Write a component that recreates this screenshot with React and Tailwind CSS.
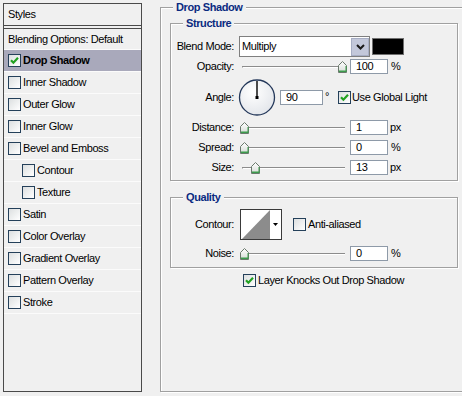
import React from "react";

function Check({ checked }) {
  return (
    <span className="w-[13px] h-[13px] shrink-0 border border-[#24405a] bg-linear-to-br from-[#dcdfe0] to-white flex items-center justify-center">
      {checked && (
        <svg width="11" height="11" viewBox="0 0 11 11">
          <path d="M2 5.2 L4.4 7.7 L9 2.8" fill="none" stroke="#21a121" strokeWidth="2.2" />
        </svg>
      )}
    </span>
  );
}

function Thumb({ className }) {
  return (
    <svg width="9" height="12" viewBox="0 0 9 12" className={className}>
      <defs>
        <linearGradient id="tg" x1="0" y1="0" x2="0" y2="1">
          <stop offset="0" stopColor="#ffffff" />
          <stop offset="1" stopColor="#d6dbd6" />
        </linearGradient>
      </defs>
      <path d="M4.5 0.5 L8.5 4.5 L8.5 11.5 L0.5 11.5 L0.5 4.5 Z" fill="url(#tg)" stroke="#6a786c" strokeWidth="1" />
      <path d="M1 9.5 L8 9.5 L8 11 L1 11 Z" fill="#3c9c4c" />
      <path d="M8 5 L8 11" stroke="#3c9c4c" strokeWidth="1" />
    </svg>
  );
}

function Slider({ thumb }) {
  return (
    <div className="relative w-[108px] h-[15px] ml-[5px] shrink-0">
      <div className="ml-[3px] mr-[2px] mt-[7px] h-[2px] border-t border-t-[#8c8c8c] border-b border-b-white border-l border-l-[#8c8c8c]" />
      <Thumb className={`absolute top-[2px] ${thumb}`} />
    </div>
  );
}

function Input({ value, w = "w-[38px]", ml = "ml-[3px]" }) {
  return (
    <div className={`${ml} ${w} shrink-0 h-[15px] bg-white border border-[#8e9aa8] pl-[5px] leading-[13px] text-black`}>
      {value}
    </div>
  );
}

function Label({ children }) {
  return <div className="w-[63px] shrink-0 text-right">{children}</div>;
}

function Group({ title, className, titleMl, children }) {
  return (
    <div
      className={`border border-[#a0a0a0] shadow-[inset_1px_1px_0_#fff,1px_1px_0_#fff] flex flex-col shrink-0 ${className}`}
    >
      <div
        className={`-mt-[7px] h-[13px] leading-[13px] self-start bg-[#f0f0f0] px-[3px] font-bold text-[#0a2a80] ${titleMl}`}
      >
        {title}
      </div>
      {children}
    </div>
  );
}

const items = [
  { label: "Drop Shadow", checked: true, active: true },
  { label: "Inner Shadow" },
  { label: "Outer Glow" },
  { label: "Inner Glow" },
  { label: "Bevel and Emboss" },
  { label: "Contour", indent: true },
  { label: "Texture", indent: true },
  { label: "Satin" },
  { label: "Color Overlay" },
  { label: "Gradient Overlay" },
  { label: "Pattern Overlay" },
  { label: "Stroke" },
];

export default function App() {
  return (
    <div className="w-[462px] h-[396px] overflow-hidden bg-[#f0f0f0] flex items-start text-black font-['Liberation_Sans',Arial,sans-serif] text-[11px] tracking-[-0.4px]">
      {/* Left styles list */}
      <div className="ml-[3px] mt-[3px] w-[139px] h-[389px] shrink-0 border border-[#4a4a4a] flex flex-col bg-[#f0f0f0]">
        <div className="h-[22px] flex items-center pl-[4px] border-b border-[#4a4a4a]">Styles</div>
        <div className="h-[2px]" />
        <div className="border-t border-[#4a4a4a] flex-1 flex flex-col">
          <div className="h-[21px] flex items-center pl-[4px] border-b border-[#fbfbfb]">
            Blending Options: Default
          </div>
          {items.map((it) => (
            <div
              key={it.label}
              className={`h-[22px] flex items-center border-b border-[#fbfbfb] ${
                it.indent ? "pl-[18px]" : "pl-[4px]"
              } ${it.active ? "bg-[#a9a9bb] font-bold" : ""}`}
            >
              <Check checked={it.checked} />
              <span className="ml-[2px]">{it.label}</span>
            </div>
          ))}
        </div>
      </div>

      {/* Right panel */}
      <Group title="Drop Shadow" titleMl="ml-[3px]" className="ml-[18px] mt-[7px] w-[312px] h-[385px] pl-[9px]">
        <Group title="Structure" titleMl="ml-[12px]" className="mt-[9px] w-[288px] h-[158px]">
          <div className="mt-[6px] h-[21px] flex items-center">
            <Label>Blend Mode:</Label>
            <div className="ml-[5px] w-[131px] h-[21px] shrink-0 bg-white border border-[#7f7f7f] flex items-center">
              <span className="flex-1 pl-[2px]">Multiply</span>
              <div className="w-[18px] h-[18px] bg-[#c3c8da] border border-[#a7aec4] flex items-center justify-center">
                <svg width="9" height="6" viewBox="0 0 9 6">
                  <path d="M1 1 L4.5 4.5 L8 1" fill="none" stroke="#1a1a1a" strokeWidth="2" />
                </svg>
              </div>
            </div>
            <div className="ml-[2px] w-[32px] h-[17px] shrink-0 bg-black border border-[#6f6f6f]" />
          </div>

          <div className="mt-[2px] h-[15px] flex items-center">
            <Label>Opacity:</Label>
            <Slider thumb="left-[99px]" />
            <Input value="100" />
            <span className="ml-[3px]">%</span>
          </div>

          <div className="mt-[5px] h-[37px] flex items-center">
            <Label>Angle:</Label>
            <svg width="38" height="37" viewBox="0 0 38 37" className="ml-[4px] shrink-0">
              <defs>
                <radialGradient id="dg" cx="40%" cy="35%" r="70%">
                  <stop offset="0" stopColor="#ffffff" />
                  <stop offset="1" stopColor="#e2e5ea" />
                </radialGradient>
              </defs>
              <circle cx="19" cy="18.5" r="17.5" fill="url(#dg)" stroke="#24385a" strokeWidth="1.3" />
              <line x1="19" y1="18.5" x2="19" y2="2" stroke="#000" strokeWidth="1.4" />
              <rect x="17.5" y="17" width="3" height="3" fill="#000" />
            </svg>
            <Input value="90" w="w-[43px]" ml="ml-[4px]" />
            <span className="ml-[2px] w-[13px] shrink-0 self-start mt-[9px]">°</span>
            <Check checked />
            <span className="ml-[1px] whitespace-nowrap">Use Global Light</span>
          </div>

          <div className="mt-[4px] h-[15px] flex items-center">
            <Label>Distance:</Label>
            <Slider thumb="left-[1px]" />
            <Input value="1" />
            <span className="ml-[2px]">px</span>
          </div>

          <div className="mt-[5px] h-[15px] flex items-center">
            <Label>Spread:</Label>
            <Slider thumb="left-[1px]" />
            <Input value="0" />
            <span className="ml-[3px]">%</span>
          </div>

          <div className="mt-[5px] h-[15px] flex items-center">
            <Label>Size:</Label>
            <Slider thumb="left-[12px]" />
            <Input value="13" />
            <span className="ml-[2px]">px</span>
          </div>
        </Group>

        <Group title="Quality" titleMl="ml-[12px]" className="mt-[16px] w-[288px] h-[71px]">
          <div className="mt-[5px] h-[31px] flex items-center">
            <Label>Contour:</Label>
            <div className="ml-[6px] w-[42px] h-[31px] shrink-0 border border-[#3a3a3a] bg-white flex">
              <svg width="29" height="29" viewBox="0 0 29 29" className="shrink-0">
                <polygon points="1,29 29,0 29,29" fill="#8c8c8c" />
              </svg>
              <div className="flex-1 flex items-center justify-center">
                <svg width="5" height="3" viewBox="0 0 5 3">
                  <polygon points="0,0 5,0 2.5,3" fill="#000" />
                </svg>
              </div>
            </div>
            <div className="ml-[11px]">
              <Check />
            </div>
            <span className="ml-[2px]">Anti-aliased</span>
          </div>

          <div className="mt-[6px] h-[15px] flex items-center">
            <Label>Noise:</Label>
            <Slider thumb="left-[1px]" />
            <Input value="0" />
            <span className="ml-[3px]">%</span>
          </div>
        </Group>

        <div className="mt-[6px] pl-[73px] h-[13px] flex items-center">
          <Check checked />
          <span className="ml-[2px] whitespace-nowrap">Layer Knocks Out Drop Shadow</span>
        </div>
      </Group>
    </div>
  );
}
